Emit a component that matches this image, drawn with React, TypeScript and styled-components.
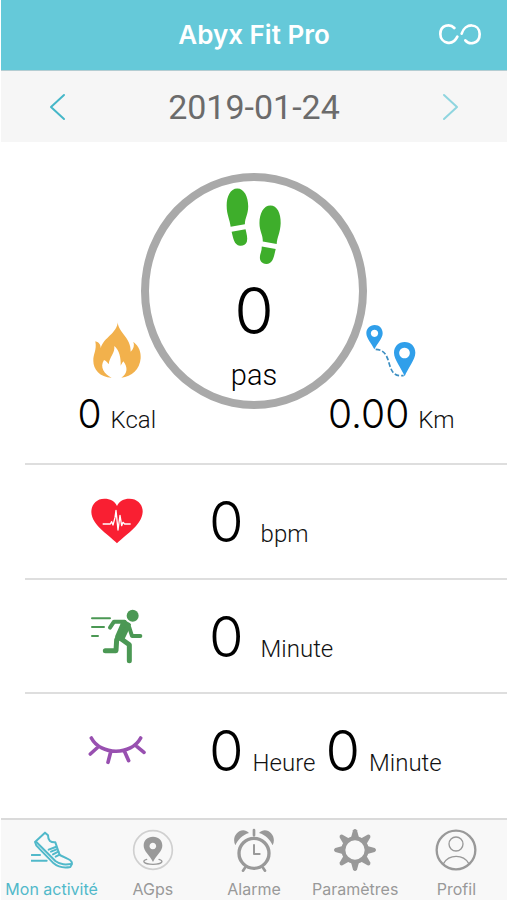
import React from "react";
import styled, { createGlobalStyle } from "styled-components";

const GlobalStyle = createGlobalStyle`
  * { box-sizing: border-box; }
  body { margin: 0; background: #fff; font-family: Inter, Roboto, "Liberation Sans", sans-serif; }
  button { border: 0; padding: 0; background: none; font: inherit; color: inherit; cursor: pointer; }
  svg { display: block; flex: none; }
`;

const Screen = styled.div`
  min-height: 100vh;
  display: flex;
  flex-direction: column;
  padding-left: 1px;
`;

const Header = styled.header`
  display: grid;
  grid-template-columns: 1fr auto 1fr;
  align-items: center;
  height: 71px;
  padding: 0 26px;
  background: #65c9d9;
  border-bottom: 1px solid #b4cdd2;
  color: #fff;
`;

const Title = styled.h1`
  grid-column: 2;
  margin: 0;
  font-size: 26px;
  line-height: 32px;
  font-weight: 600;
`;

const LinkButton = styled.button`
  justify-self: end;
`;

const DateBar = styled.nav`
  display: flex;
  align-items: center;
  justify-content: space-between;
  height: 71px;
  padding: 0 48px;
  background: #f6f6f6;
`;

const DateText = styled.time`
  font-family: Roboto, Inter, sans-serif;
  font-size: 34px;
  line-height: 40px;
  color: #6b6b6b;
`;

const Arrow = styled.button<{ $dim?: boolean }>`
  color: ${(p) => (p.$dim ? "#8fd5df" : "#45b7c8")};
`;

const Hero = styled.section`
  display: grid;
  grid-template-columns: 232fr 43fr 232fr;
  padding: 31px 0 25px;
`;

const Ring = styled.div`
  grid-area: 1 / 1 / 2 / -1;
  justify-self: center;
  display: flex;
  flex-direction: column;
  align-items: center;
  width: 226px;
  height: 236px;
  margin-bottom: 29px;
  padding-top: 6px;
  border: 8px solid #a9a9a9;
  border-radius: 50%;
`;

const StepCount = styled.strong`
  margin-top: 8px;
  font-size: 64px;
  line-height: 76px;
  font-weight: 300;
`;

const StepLabel = styled.span`
  margin-top: 4px;
  font-family: Roboto, Inter, sans-serif;
  font-size: 29px;
  line-height: 44px;
  font-weight: 300;
`;

const Stat = styled.div<{ $column: number }>`
  grid-row: 1;
  grid-column: ${(p) => p.$column};
  align-self: end;
  display: flex;
  flex-direction: column;
  align-items: center;
  gap: 12px;
`;

const Reading = styled.p<{ $gap: number }>`
  display: flex;
  align-items: baseline;
  gap: ${(p) => p.$gap}px;
  margin: 0;
  white-space: nowrap;
`;

const Value = styled.span<{ $large?: boolean }>`
  font-size: ${(p) => (p.$large ? 56 : 39)}px;
  line-height: ${(p) => (p.$large ? 68 : 48)}px;
  font-weight: 300;
  color: #000;
`;

const Unit = styled.span`
  font-family: Roboto, Inter, sans-serif;
  font-size: 24px;
  font-weight: 300;
  color: #111;
`;

const Metrics = styled.ul`
  flex: 1;
  display: grid;
  grid-template-rows: 115px 114px 1fr;
  margin: 0;
  padding: 0 0 0 24px;
  list-style: none;
`;

const Metric = styled.li`
  display: grid;
  grid-template-columns: 184px 1fr;
  align-items: start;
  border-top: 2px solid #dedede;
  padding-top: 23px;
`;

const MetricIcon = styled.div`
  display: grid;
  place-items: center;
  height: 66px;
`;

const Group = styled.div`
  display: flex;
  gap: 10px;
`;

const TabBar = styled.nav`
  display: grid;
  grid-template-columns: repeat(5, 1fr);
  height: 82px;
  border-top: 2px solid #dadada;
  background: #f8f8f8;
`;

const Tab = styled.button<{ $active?: boolean }>`
  display: flex;
  flex-direction: column;
  align-items: center;
  gap: 7px;
  padding-top: 8px;
  color: ${(p) => (p.$active ? "#51b9ca" : "#999")};
`;

const TabLabel = styled.span`
  font-size: 16px;
  line-height: 20px;
  font-weight: 400;
  white-space: nowrap;
`;

const stroke = {
  fill: "none",
  stroke: "currentColor",
  strokeLinecap: "round" as const,
  strokeLinejoin: "round" as const,
};

const LinkIcon = () => (
  <svg width="42" height="24" viewBox="1317 69 126 72" aria-hidden="true" {...stroke} strokeWidth="8">
    <path d="M1363 84C1350 70 1321 74 1321 102C1321 130 1358 140 1372 110" />
    <path d="M1385 101C1394 68 1438 68 1439 102C1439 132 1408 136 1396 121" />
  </svg>
);

const Chevron = ({ right }: { right?: boolean }) => (
  <svg width="18" height="28" viewBox="0 0 18 28" aria-hidden="true" {...stroke} strokeWidth="2">
    <path d={right ? "M3 2L16 14L3 26" : "M15 2L2 14L15 26"} />
  </svg>
);

const StepsIcon = () => (
  <svg width="58" height="78" viewBox="270 65 175 235" fill="#3eae2b" aria-hidden="true">
    <path d="M307 69C328 69 340 94 340 123C340 148 330 158 330 177L287 185C285 164 275 150 275 121C275 93 286 69 307 69Z" />
    <path d="M290 200L332 192C335 206 339 218 336 230C333 240 323 243 315 242C297 240 295 219 290 200Z" />
    <path d="M407 121C427 121 439 144 438 174C437 203 427 216 426 237L384 229C385 210 374 198 374 174C374 144 387 121 407 121Z" />
    <path d="M381 244L423 252C418 270 417 296 395 297C371 295 374 274 378 263C380 257 381 251 381 244Z" />
  </svg>
);

const FlameIcon = () => (
  <svg width="48" height="58" viewBox="68 25 144 174" fill="#f2b14c" aria-hidden="true">
    <path d="M143 27C137 57 184 77 181 120C190 111 193 101 189 90C207 105 212 121 211 140C209 172 184 196 153 198C172 187 173 166 159 149C154 156 153 159 151 162C152 139 147 116 132 103C134 126 118 134 115 158C110 151 108 148 101 145C87 166 102 189 124 198C88 197 69 173 69 148C68 127 80 117 75 89C87 92 91 100 91 110C100 75 140 68 143 27Z" />
  </svg>
);

const RouteIcon = () => (
  <svg width="50" height="54" viewBox="140 30 150 162" aria-hidden="true">
    <path
      fill="#309fea"
      fillRule="evenodd"
      d="M166 33C151 33 141 44 141 58C141 73 157 89 165 106C174 89 190 73 190 58C190 43 180 33 166 33ZM166 47A11 11 0 1 1 165 47ZM256 84C237 84 224 98 224 116C224 137 246 162 256 187C266 162 288 137 288 116C288 98 275 84 256 84ZM256 101A16 16 0 1 1 255 101Z"
    />
    <path d="M169 106C223 108 196 182 242 185H253" fill="none" stroke="#3d8fc2" strokeWidth="5" strokeDasharray="14 6" />
  </svg>
);

const HeartIcon = () => (
  <svg width="52" height="46" viewBox="33 25 156 138" aria-hidden="true">
    <path
      fill="#f91f32"
      d="M111 161C94 141 35 108 34 67C34 45 49 27 73 27C91 27 104 33 111 49C118 33 131 27 148 27C173 27 189 45 188 67C186 108 129 141 111 161Z"
    />
    <path
      d="M68 103H91L95 96L99 106L105 84L108 62L114 121L120 77L125 108L129 98L134 103H152"
      fill="none"
      stroke="#fff"
      strokeWidth="4"
      strokeLinejoin="round"
    />
  </svg>
);

const RunnerIcon = () => (
  <svg width="54" height="55" viewBox="32 26 162 165" color="#4b9854" aria-hidden="true" {...stroke}>
    <circle cx="160" cy="46" r="18" fill="currentColor" stroke="none" />
    <path d="M38 54H92M38 80H74M38 107H56" strokeWidth="6" />
    <path d="M92 82L104 64H136M150 82L158 107H183" strokeWidth="12" />
    <path d="M112 118L110 151H78M126 116L150 133V181" strokeWidth="15" />
    <path d="M133 66L148 74L128 116L114 110Z" fill="currentColor" strokeWidth="14" />
  </svg>
);

const LashesIcon = () => (
  <svg width="58" height="30" viewBox="24 46 174 88" color="#9850b0" aria-hidden="true" {...stroke} strokeWidth="11">
    <path d="M34 54C62 107 154 107 182 54M51 84L31 102M92 96L84 127M134 95L146 122M171 80L192 97" />
  </svg>
);

const ShoeIcon = () => (
  <svg width="42" height="44" viewBox="92 40 126 132" aria-hidden="true" {...stroke} strokeWidth="6">
    <path d="M134 54L104 82C105 91 109 95 116 101L160 146C173 157 194 160 210 157C219 145 214 137 201 132L178 121L165 83C151 84 143 78 143 62Z" />
    <path d="M108 82L165 139C181 151 196 150 214 148M145 105L166 97M152 111L169 104M158 119L174 111M166 126L178 120" />
    <path d="M94 121H119M94 138H139" />
  </svg>
);

const GpsIcon = () => (
  <svg width="42" height="44" viewBox="394 38 126 132" aria-hidden="true" {...stroke}>
    <circle cx="457" cy="104" r="58" stroke="#d0d0d0" strokeWidth="5" />
    <path d="M438 132C423 136 427 146 457 147C487 146 490 136 475 132" strokeWidth="4" />
    <path
      fill="currentColor"
      fillRule="evenodd"
      stroke="none"
      d="M457 64C440 64 429 75 429 91C429 108 448 120 457 140C466 120 485 108 485 91C485 75 474 64 457 64ZM457 82A10 10 0 1 1 456 82Z"
    />
  </svg>
);

const AlarmIcon = () => (
  <svg width="42" height="44" viewBox="84 40 126 132" aria-hidden="true" {...stroke}>
    <circle cx="147" cy="116" r="45" strokeWidth="10" />
    <path d="M147 46V62M120 159L114 168M174 159L180 168" strokeWidth="8" />
    <path d="M147 91V118H164" strokeWidth="6" />
    <path d="M91 92C76 61 111 32 132 55C112 61 99 75 91 92ZM203 92C218 61 183 32 162 55C182 61 195 75 203 92Z" fill="currentColor" stroke="none" />
  </svg>
);

const teeth = [0, 45, 90, 135, 180, 225, 270, 315];

const GearIcon = () => (
  <svg width="42" height="44" viewBox="-63 -66 126 132" aria-hidden="true" {...stroke}>
    <circle r="35" strokeWidth="12" />
    {teeth.map((angle) => (
      <path key={angle} transform={`rotate(${angle})`} d="M-12 -37L-6 -59Q0 -67 6 -59L12 -37Z" fill="currentColor" stroke="none" />
    ))}
  </svg>
);

const ProfileIcon = () => (
  <svg width="42" height="44" viewBox="689 41 126 132" aria-hidden="true" {...stroke}>
    <circle cx="752" cy="107" r="58" strokeWidth="7" />
    <circle cx="752" cy="89" r="21" strokeWidth="4" />
    <path d="M715 147C731 119 774 119 790 147" strokeWidth="4" />
  </svg>
);

const tabs = [
  { label: "Mon activité", Icon: ShoeIcon, active: true },
  { label: "AGps", Icon: GpsIcon },
  { label: "Alarme", Icon: AlarmIcon },
  { label: "Paramètres", Icon: GearIcon },
  { label: "Profil", Icon: ProfileIcon },
];

const metrics = [
  { Icon: HeartIcon, gap: 17, readings: [["0", "bpm"]] },
  { Icon: RunnerIcon, gap: 17, readings: [["0", "Minute"]] },
  { Icon: LashesIcon, gap: 9, readings: [["0", "Heure"], ["0", "Minute"]] },
];

export default function App() {
  return (
    <Screen>
      <GlobalStyle />
      <Header>
        <Title>Abyx Fit Pro</Title>
        <LinkButton type="button" aria-label="Connexion"><LinkIcon /></LinkButton>
      </Header>
      <DateBar>
        <Arrow type="button" aria-label="Jour précédent"><Chevron /></Arrow>
        <DateText dateTime="2019-01-24">2019-01-24</DateText>
        <Arrow type="button" $dim aria-label="Jour suivant"><Chevron right /></Arrow>
      </DateBar>
      <Hero>
        <Ring>
          <StepsIcon />
          <StepCount>0</StepCount>
          <StepLabel>pas</StepLabel>
        </Ring>
        <Stat $column={1}>
          <FlameIcon />
          <Reading $gap={9}><Value>0</Value><Unit>Kcal</Unit></Reading>
        </Stat>
        <Stat $column={3}>
          <RouteIcon />
          <Reading $gap={9}><Value>0.00</Value><Unit>Km</Unit></Reading>
        </Stat>
      </Hero>
      <Metrics>
        {metrics.map(({ Icon, gap, readings }, row) => (
          <Metric key={row}>
            <MetricIcon><Icon /></MetricIcon>
            <Group>
              {readings.map(([value, unit]) => (
                <Reading key={unit} $gap={gap}><Value $large>{value}</Value><Unit>{unit}</Unit></Reading>
              ))}
            </Group>
          </Metric>
        ))}
      </Metrics>
      <TabBar>
        {tabs.map(({ label, Icon, active }) => (
          <Tab key={label} type="button" $active={active} aria-current={active ? "page" : undefined}>
            <Icon />
            <TabLabel>{label}</TabLabel>
          </Tab>
        ))}
      </TabBar>
    </Screen>
  );
}
